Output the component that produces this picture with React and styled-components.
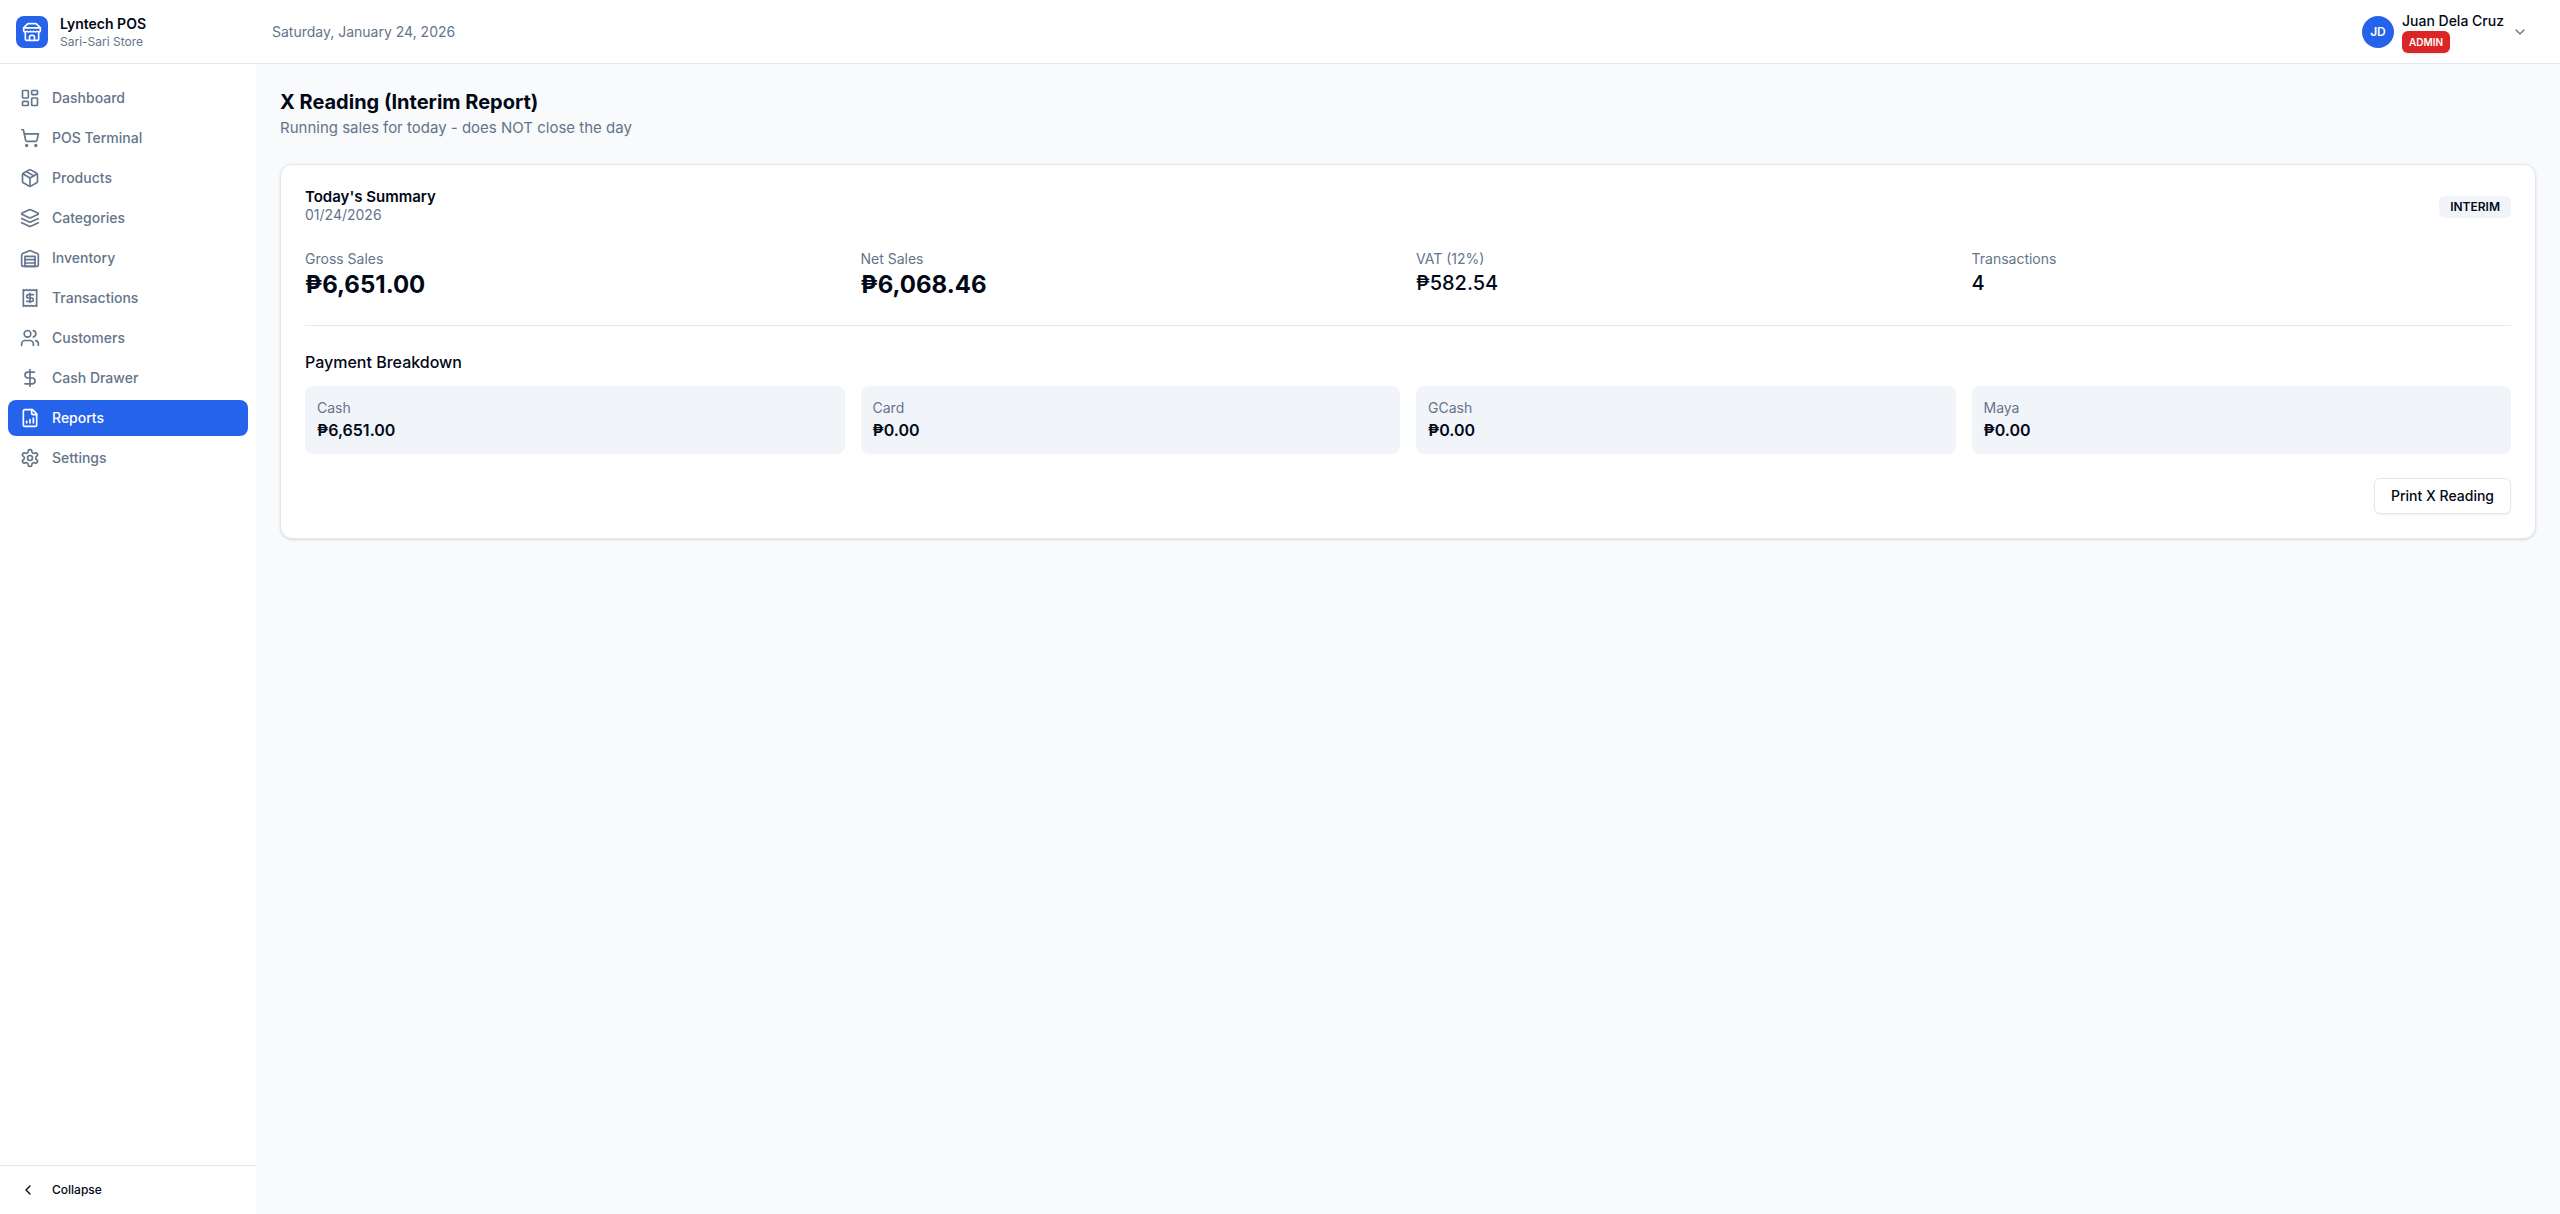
import React from "react";
import styled, { createGlobalStyle } from "styled-components";
import {
  ChevronDown,
  ChevronLeft,
  DollarSign,
  LayoutDashboard,
  ShoppingCart,
  Users,
} from "lucide-react";

const color = {
  ink: "#020817",
  muted: "#64748b",
  line: "#e2e8f0",
  soft: "#f1f5f9",
  page: "#f8fafc",
  primary: "#2563eb",
  danger: "#dc2626",
};

const GlobalStyle = createGlobalStyle`
  *, *::before, *::after { box-sizing: border-box; }
  body {
    margin: 0;
    background: ${color.page};
    color: ${color.ink};
    font-family: Inter, "Noto Sans", sans-serif;
    font-size: 16px;
    line-height: 24px;
    -webkit-font-smoothing: antialiased;
  }
  h1, h2, h3, p, dl, dt, dd, ul { margin: 0; padding: 0; }
  ul { list-style: none; }
  button { font-family: inherit; cursor: pointer; }
  svg { flex-shrink: 0; }
`;

const Shell = styled.div`
  display: flex;
  flex-direction: column;
  min-height: 100vh;
`;

const Header = styled.header`
  display: flex;
  align-items: center;
  height: 64px;
  padding-right: 24px;
  background: #fff;
  border-bottom: 1px solid ${color.line};
`;

const Brand = styled.a`
  display: flex;
  align-items: center;
  gap: 12px;
  width: 256px;
  padding: 0 16px;
  color: inherit;
  text-decoration: none;
`;

const BrandMark = styled.span`
  display: grid;
  place-items: center;
  width: 32px;
  height: 32px;
  border-radius: 8px;
  background: ${color.primary};
  color: #fff;
`;

const Stack = styled.span`
  display: flex;
  flex-direction: column;
  align-items: flex-start;
`;

const BrandName = styled.span`
  font-size: 14px;
  line-height: 20px;
  font-weight: 600;
`;

const BrandNote = styled.span`
  font-size: 12px;
  line-height: 16px;
  color: ${color.muted};
`;

const Today = styled.time`
  flex: 1;
  padding-left: 16px;
  font-size: 14px;
  line-height: 20px;
  color: ${color.muted};
`;

const UserButton = styled.button`
  display: flex;
  align-items: center;
  gap: 8px;
  padding: 0 8px;
  border: 0;
  background: none;
  color: ${color.ink};
`;

const Avatar = styled.span`
  display: grid;
  place-items: center;
  width: 32px;
  height: 32px;
  border-radius: 50%;
  background: ${color.primary};
  color: #fff;
  font-size: 12px;
  line-height: 16px;
  font-weight: 600;
`;

const UserName = styled.span`
  font-size: 14px;
  line-height: 20px;
  font-weight: 500;
`;

const Badge = styled.span`
  padding: ${(p) => (p.$danger ? "3px 7px" : "3px 11px")};
  border-radius: 6px;
  background: ${(p) => (p.$danger ? color.danger : color.soft)};
  color: ${(p) => (p.$danger ? "#fff" : color.ink)};
  font-size: ${(p) => (p.$danger ? "10px" : "12px")};
  line-height: 16px;
  font-weight: 600;
  box-shadow: ${(p) => (p.$danger ? "0 1px 2px rgba(0, 0, 0, 0.1)" : "none")};
`;

const Body = styled.div`
  display: flex;
  flex: 1;
`;

const Sidebar = styled.aside`
  display: flex;
  flex-direction: column;
  flex-shrink: 0;
  width: 256px;
  background: #fff;
`;

const Nav = styled.nav`
  flex: 1;
  padding: 16px 8px;
`;

const NavList = styled.ul`
  display: flex;
  flex-direction: column;
  gap: 4px;
`;

const NavLink = styled.a`
  display: flex;
  align-items: center;
  gap: 12px;
  padding: 8px 12px;
  border-radius: 8px;
  background: ${(p) => (p.$active ? color.primary : "transparent")};
  color: ${(p) => (p.$active ? "#fff" : color.muted)};
  font-size: 14px;
  line-height: 20px;
  font-weight: 500;
  text-decoration: none;
`;

const SidebarFoot = styled.div`
  padding: 8px;
  border-top: 1px solid ${color.line};
`;

const CollapseButton = styled.button`
  display: flex;
  align-items: center;
  gap: 16px;
  width: 100%;
  height: 32px;
  padding: 0 12px;
  border: 0;
  background: none;
  color: ${color.ink};
  font-size: 12px;
  line-height: 16px;
  font-weight: 500;
`;

const Main = styled.main`
  display: flex;
  flex: 1;
  flex-direction: column;
  gap: 24px;
  min-width: 0;
  padding: 24px;
`;

const PageTitle = styled.h1`
  font-size: 20px;
  line-height: 28px;
  font-weight: 700;
`;

const PageNote = styled.p`
  font-size: 15px;
  line-height: 24px;
  color: ${color.muted};
`;

const Card = styled.section`
  display: flex;
  flex-direction: column;
  gap: 24px;
  padding: 24px;
  border: 1px solid ${color.line};
  border-radius: 12px;
  background: #fff;
  box-shadow: 0 1px 3px rgba(0, 0, 0, 0.1), 0 1px 2px -1px rgba(0, 0, 0, 0.1);
`;

const CardHead = styled.div`
  display: flex;
  align-items: center;
  justify-content: space-between;
`;

const CardTitle = styled.h2`
  font-size: 15px;
  line-height: 16px;
  font-weight: 600;
`;

const Caption = styled.p`
  font-size: 14px;
  line-height: 20px;
  color: ${color.muted};
`;

const Grid = styled.dl`
  display: grid;
  grid-template-columns: repeat(4, minmax(0, 1fr));
  gap: 16px;
`;

const Label = styled.dt`
  font-size: 14px;
  line-height: 20px;
  color: ${color.muted};
`;

const Figure = styled.dd`
  font-size: ${(p) => (p.$large ? "24px" : "20px")};
  line-height: ${(p) => (p.$large ? "32px" : "28px")};
  font-weight: ${(p) => (p.$large ? 700 : 500)};
`;

const Breakdown = styled.div`
  display: flex;
  flex-direction: column;
  gap: 12px;
  padding-top: 24px;
  border-top: 1px solid ${color.line};
`;

const SectionTitle = styled.h3`
  font-size: 16px;
  line-height: 24px;
  font-weight: 500;
`;

const Tile = styled.div`
  padding: 12px;
  border-radius: 8px;
  background: ${color.soft};
`;

const Amount = styled.dd`
  font-weight: 600;
`;

const Actions = styled.div`
  display: flex;
  justify-content: flex-end;
`;

const OutlineButton = styled.button`
  height: 36px;
  padding: 0 16px;
  border: 1px solid ${color.line};
  border-radius: 6px;
  background: #fff;
  color: ${color.ink};
  font-size: 14px;
  line-height: 20px;
  font-weight: 500;
  box-shadow: 0 1px 2px rgba(0, 0, 0, 0.05);
`;

// Outline icons drawn on a 24-unit grid.
const makeIcon = (paths, extra) =>
  function OutlineIcon({ size = 20 }) {
    return (
      <svg
        width={size}
        height={size}
        viewBox="0 0 24 24"
        fill="none"
        stroke="currentColor"
        strokeWidth="2"
        strokeLinecap="round"
        strokeLinejoin="round"
        aria-hidden="true"
      >
        {paths.map((d) => (
          <path key={d} d={d} />
        ))}
        {extra}
      </svg>
    );
  };

const StoreIcon = makeIcon([
  "m2 7 4.41-4.41A2 2 0 0 1 7.83 2h8.34a2 2 0 0 1 1.42.59L22 7",
  "M4 12v8a2 2 0 0 0 2 2h12a2 2 0 0 0 2-2v-8",
  "M15 22v-4a2 2 0 0 0-2-2h-2a2 2 0 0 0-2 2v4",
  "M2 7h20",
  "M22 7v3a2 2 0 0 1-2 2a2.7 2.7 0 0 1-1.59-.63.7.7 0 0 0-.82 0A2.7 2.7 0 0 1 16 12a2.7 2.7 0 0 1-1.59-.63.7.7 0 0 0-.82 0A2.7 2.7 0 0 1 12 12a2.7 2.7 0 0 1-1.59-.63.7.7 0 0 0-.82 0A2.7 2.7 0 0 1 8 12a2.7 2.7 0 0 1-1.59-.63.7.7 0 0 0-.82 0A2.7 2.7 0 0 1 4 12a2 2 0 0 1-2-2V7",
]);

const PackageIcon = makeIcon([
  "m7.5 4.27 9 5.15",
  "M21 8a2 2 0 0 0-1-1.73l-7-4a2 2 0 0 0-2 0l-7 4A2 2 0 0 0 3 8v8a2 2 0 0 0 1 1.73l7 4a2 2 0 0 0 2 0l7-4A2 2 0 0 0 21 16Z",
  "m3.3 7 8.7 5 8.7-5",
  "M12 22V12",
]);

const LayersIcon = makeIcon([
  "m12.83 2.18a2 2 0 0 0-1.66 0L2.6 6.08a1 1 0 0 0 0 1.83l8.58 3.91a2 2 0 0 0 1.66 0l8.58-3.9a1 1 0 0 0 0-1.83Z",
  "m22 17.65-9.17 4.16a2 2 0 0 1-1.66 0L2 17.65",
  "m22 12.65-9.17 4.16a2 2 0 0 1-1.66 0L2 12.65",
]);

const WarehouseIcon = makeIcon(
  [
    "M22 8.35V20a2 2 0 0 1-2 2H4a2 2 0 0 1-2-2V8.35A2 2 0 0 1 3.26 6.5l8-3.2a2 2 0 0 1 1.48 0l8 3.2A2 2 0 0 1 22 8.35Z",
    "M6 18h12",
    "M6 14h12",
  ],
  <rect width="12" height="12" x="6" y="10" />
);

const ReceiptIcon = makeIcon([
  "M4 2v20l2-1 2 1 2-1 2 1 2-1 2 1 2-1 2 1V2l-2 1-2-1-2 1-2-1-2 1-2-1-2 1Z",
  "M16 8h-6a2 2 0 1 0 0 4h4a2 2 0 1 1 0 4H8",
  "M12 17.5v-11",
]);

const ReportIcon = makeIcon([
  "M15 2H6a2 2 0 0 0-2 2v16a2 2 0 0 0 2 2h12a2 2 0 0 0 2-2V7Z",
  "M14 2v4a2 2 0 0 0 2 2h4",
  "M8 18v-2",
  "M12 18v-4",
  "M16 18v-6",
]);

const GearIcon = makeIcon(
  [
    "M12.22 2h-.44a2 2 0 0 0-2 2v.18a2 2 0 0 1-1 1.73l-.43.25a2 2 0 0 1-2 0l-.15-.08a2 2 0 0 0-2.73.73l-.22.38a2 2 0 0 0 .73 2.73l.15.1a2 2 0 0 1 1 1.72v.51a2 2 0 0 1-1 1.74l-.15.09a2 2 0 0 0-.73 2.73l.22.38a2 2 0 0 0 2.73.73l.15-.08a2 2 0 0 1 2 0l.43.25a2 2 0 0 1 1 1.73V20a2 2 0 0 0 2 2h.44a2 2 0 0 0 2-2v-.18a2 2 0 0 1 1-1.73l.43-.25a2 2 0 0 1 2 0l.15.08a2 2 0 0 0 2.73-.73l.22-.39a2 2 0 0 0-.73-2.73l-.15-.08a2 2 0 0 1-1-1.74v-.5a2 2 0 0 1 1-1.74l.15-.09a2 2 0 0 0 .73-2.73l-.22-.38a2 2 0 0 0-2.73-.73l-.15.08a2 2 0 0 1-2 0l-.43-.25a2 2 0 0 1-1-1.73V4a2 2 0 0 0-2-2z",
  ],
  <circle cx="12" cy="12" r="3" />
);

const navItems = [
  { label: "Dashboard", icon: LayoutDashboard },
  { label: "POS Terminal", icon: ShoppingCart },
  { label: "Products", icon: PackageIcon },
  { label: "Categories", icon: LayersIcon },
  { label: "Inventory", icon: WarehouseIcon },
  { label: "Transactions", icon: ReceiptIcon },
  { label: "Customers", icon: Users },
  { label: "Cash Drawer", icon: DollarSign },
  { label: "Reports", icon: ReportIcon, active: true },
  { label: "Settings", icon: GearIcon },
];

const totals = [
  { label: "Gross Sales", value: "₱6,651.00", large: true },
  { label: "Net Sales", value: "₱6,068.46", large: true },
  { label: "VAT (12%)", value: "₱582.54" },
  { label: "Transactions", value: "4" },
];

const payments = [
  { label: "Cash", value: "₱6,651.00" },
  { label: "Card", value: "₱0.00" },
  { label: "GCash", value: "₱0.00" },
  { label: "Maya", value: "₱0.00" },
];

export default function App() {
  return (
    <Shell>
      <GlobalStyle />
      <Header>
        <Brand href="#">
          <BrandMark>
            <StoreIcon size={20} />
          </BrandMark>
          <Stack>
            <BrandName>Lyntech POS</BrandName>
            <BrandNote>Sari-Sari Store</BrandNote>
          </Stack>
        </Brand>
        <Today dateTime="2026-01-24">Saturday, January 24, 2026</Today>
        <UserButton type="button">
          <Avatar>JD</Avatar>
          <Stack>
            <UserName>Juan Dela Cruz</UserName>
            <Badge $danger>ADMIN</Badge>
          </Stack>
          <ChevronDown size={16} color={color.muted} />
        </UserButton>
      </Header>
      <Body>
        <Sidebar>
          <Nav>
            <NavList>
              {navItems.map(({ label, icon: Icon, active }) => (
                <li key={label}>
                  <NavLink href="#" $active={active} aria-current={active ? "page" : undefined}>
                    <Icon size={20} />
                    {label}
                  </NavLink>
                </li>
              ))}
            </NavList>
          </Nav>
          <SidebarFoot>
            <CollapseButton type="button">
              <ChevronLeft size={16} />
              Collapse
            </CollapseButton>
          </SidebarFoot>
        </Sidebar>
        <Main>
          <div>
            <PageTitle>X Reading (Interim Report)</PageTitle>
            <PageNote>Running sales for today - does NOT close the day</PageNote>
          </div>
          <Card>
            <CardHead>
              <div>
                <CardTitle>Today's Summary</CardTitle>
                <Caption>01/24/2026</Caption>
              </div>
              <Badge>INTERIM</Badge>
            </CardHead>
            <Grid>
              {totals.map((item) => (
                <div key={item.label}>
                  <Label>{item.label}</Label>
                  <Figure $large={item.large}>{item.value}</Figure>
                </div>
              ))}
            </Grid>
            <Breakdown>
              <SectionTitle>Payment Breakdown</SectionTitle>
              <Grid>
                {payments.map((item) => (
                  <Tile key={item.label}>
                    <Label>{item.label}</Label>
                    <Amount>{item.value}</Amount>
                  </Tile>
                ))}
              </Grid>
            </Breakdown>
            <Actions>
              <OutlineButton type="button">Print X Reading</OutlineButton>
            </Actions>
          </Card>
        </Main>
      </Body>
    </Shell>
  );
}
